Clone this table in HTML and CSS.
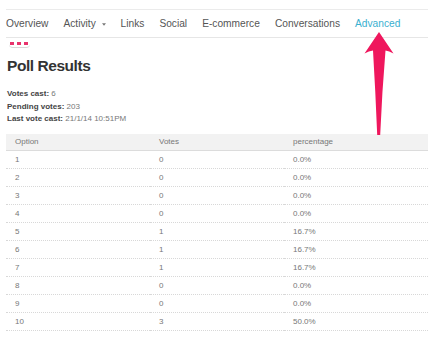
FILE: index.html
```html
<!DOCTYPE html>
<html>
<head>
<meta charset="utf-8">
<link rel="stylesheet" href="styles.css">
</head>
<body>
<div class="page">
  <nav class="nav">
    <span class="nav-item">Overview</span>
    <span class="nav-item">Activity <svg class="caret" width="4" height="3" viewBox="0 0 4 3"><path d="M0 0.2H4L2 2.8Z" fill="#777"/></svg></span>
    <span class="nav-item">Links</span>
    <span class="nav-item">Social</span>
    <span class="nav-item">E-commerce</span>
    <span class="nav-item">Conversations</span>
    <span class="nav-item active">Advanced</span>
  </nav>
  <div class="more"><i></i><i></i><i></i></div>
  <h1 class="title">Poll Results</h1>
  <div class="info">
    <div><b>Votes cast:</b> 6</div>
    <div><b>Pending votes:</b> 203</div>
    <div><b>Last vote cast:</b> 21/1/14 10:51PM</div>
  </div>
  <table class="results">
    <colgroup><col class="c1"><col class="c2"><col class="c3"></colgroup>
    <thead>
      <tr><th>Option</th><th>Votes</th><th>percentage</th></tr>
    </thead>
    <tbody>
      <tr><td>1</td><td>0</td><td>0.0%</td></tr>
      <tr><td>2</td><td>0</td><td>0.0%</td></tr>
      <tr><td>3</td><td>0</td><td>0.0%</td></tr>
      <tr><td>4</td><td>0</td><td>0.0%</td></tr>
      <tr><td>5</td><td>1</td><td>16.7%</td></tr>
      <tr><td>6</td><td>1</td><td>16.7%</td></tr>
      <tr><td>7</td><td>1</td><td>16.7%</td></tr>
      <tr><td>8</td><td>0</td><td>0.0%</td></tr>
      <tr><td>9</td><td>0</td><td>0.0%</td></tr>
      <tr><td>10</td><td>3</td><td>50.0%</td></tr>
    </tbody>
  </table>
</div>
<svg class="arrow" width="434" height="346" viewBox="0 0 434 346">
  <path d="M379 32 L393.5 53.5 Q389 51 385.5 50.5 Q382 92 380.2 135 L377.2 135 Q375.5 92 373 50.5 Q369 51 364.5 53.5 Z" fill="#ef175d"/>
</svg>
</body>
</html>
```

FILE: styles.css
```css
html, body {
  margin: 0;
  padding: 0;
  background: #fff;
}
body {
  font-family: "Liberation Sans", Arial, sans-serif;
  position: relative;
  width: 434px;
  height: 346px;
  overflow: hidden;
}
.page {
  padding: 9px 6px 0 6px;
}
.nav {
  display: flex;
  align-items: center;
  gap: 15px;
  height: 27px;
  border-top: 1px solid #ebebeb;
  border-bottom: 1px solid #e6e6e6;
  font-size: 10.2px;
  color: #555;
}
.nav-item {
  display: flex;
  align-items: center;
  white-space: pre;
}
.caret {
  margin-left: 3px;
  margin-top: 1px;
}
.nav-item.active {
  color: #3ab0cf;
}
.more {
  display: flex;
  gap: 3px;
  width: 20px;
  margin: 3px 0 0 3px;
  padding: 1px 0 2px 1px;
  border-bottom: 1.5px solid #d8d8d8;
  border-radius: 0 0 4px 4px;
}
.more i {
  display: block;
  width: 4px;
  height: 3px;
  background: #e8336c;
}
.title {
  margin: 9px 0 0 1px;
  font-size: 15.5px;
  line-height: 18px;
  letter-spacing: -0.45px;
  font-weight: bold;
  color: #333;
}
.info {
  margin: 13px 0 0 1px;
  font-size: 8px;
  line-height: 12.5px;
  color: #777;
}
.info b {
  color: #444;
}
.results {
  margin-top: 8px;
  width: 422px;
  border-collapse: collapse;
  font-size: 8px;
  color: #777;
  table-layout: fixed;
}
.c1 { width: 144px; }
.c2 { width: 134px; }
.c3 { width: 144px; }
.results th {
  background: #f2f2f2;
  height: 16px;
  padding: 0 0 0 9px;
  text-align: left;
  font-weight: normal;
  color: #777;
  border-bottom: 1px solid #dcdcdc;
}
.results td {
  height: 17px;
  padding: 0 0 0 9px;
  border-bottom: 1px dotted #d8d8d8;
}
.arrow {
  position: absolute;
  left: 0;
  top: 0;
  pointer-events: none;
}
```
